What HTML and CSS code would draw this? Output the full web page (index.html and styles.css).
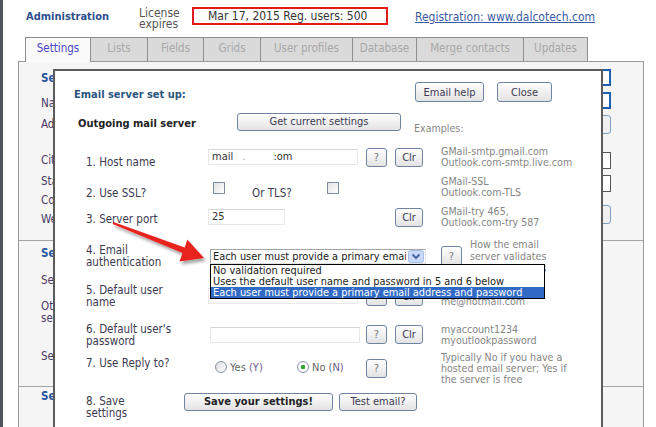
FILE: index.html
```html
<!DOCTYPE html>
<html lang="en">
<head>
  <meta charset="UTF-8">
  <meta name="viewport" content="width=device-width, initial-scale=1">
  <title>Administration - Email server set up</title>
  <link rel="stylesheet" href="styles.css">
</head>
<body>
<div class="page">

  <div class="top">
    <div class="brand">Administration</div>
    <div class="lic">License<br>expires</div>
    <div class="licbox">Mar 17, 2015 Reg. users: 500</div>
    <a class="reg" href="#">Registration: www.dalcotech.com</a>
  </div>

  <div class="tabs">
    <div class="tab on">Settings</div>
    <div class="tab">Lists</div>
    <div class="tab">Fields</div>
    <div class="tab">Grids</div>
    <div class="tab">User profiles</div>
    <div class="tab">Database</div>
    <div class="tab">Merge contacts</div>
    <div class="tab">Updates</div>
  </div>

  <div class="panel">
    <div class="sec sec1">
      <div class="bgl">
        <div class="bh">Settings</div>
        <div class="bt m11">Name</div>
        <div class="bt m7">Address</div>
        <div class="bt m22">City</div>
        <div class="bt m7">State</div>
        <div class="bt m5">Country</div>
        <div class="bt m5">Web site</div>
      </div>
      <div class="bgr">
        <div class="bx blue first"></div>
        <div class="bx blue"></div>
        <div class="bx btnish"></div>
        <div class="bx gray gap18"></div>
        <div class="bx gray"></div>
        <div class="bx btnish gap13"></div>
      </div>
    </div>
    <div class="sec sec2">
      <div class="bgl">
        <div class="bh">Security</div>
        <div class="bt m13">Session timeout</div>
        <div class="bt m13 two">Other<br>settings</div>
        <div class="bt m25">Send limit</div>
      </div>
    </div>
    <div class="sec sec3">
      <div class="bgl">
        <div class="bh">Search</div>
      </div>
    </div>
  </div>

  <div class="modal">
    <div class="mhead">
      <div class="mtitle">Email server set up:</div>
      <div class="mbtns">
        <button class="b help">Email help</button>
        <button class="b close">Close</button>
      </div>
    </div>

    <div class="row0">
      <div class="ttl">Outgoing mail server</div>
      <button class="b getcur">Get current settings</button>
      <div class="exh">Examples:</div>
    </div>

    <div class="frow host">
      <div class="lbl">1. Host name</div>
      <div class="ctl"><div class="inp">mail<span class="dot">.</span><span class="om">:om</span></div></div>
      <div class="hb"><button class="b q">?</button><button class="b clr">Clr</button></div>
      <div class="ex">GMail-smtp.gmail.com<br>Outlook.com-smtp.live.com</div>
    </div>

    <div class="frow ssl">
      <div class="lbl">2. Use SSL?</div>
      <div class="ctl">
        <span class="cb"></span>
        <span class="or">Or TLS?</span>
        <span class="cb two"></span>
      </div>
      <div class="hb"></div>
      <div class="ex">GMail-SSL<br>Outlook.com-TLS</div>
    </div>

    <div class="frow port">
      <div class="lbl">3. Server port</div>
      <div class="ctl"><div class="inp short">25</div></div>
      <div class="hb"><button class="b clr solo">Clr</button></div>
      <div class="ex">GMail-try 465,<br>Outlook.com-try 587</div>
    </div>

    <div class="frow auth">
      <div class="lbl">4. Email<br>authentication</div>
      <div class="sel">
        <span class="seltxt">Each user must provide a primary email address and password</span>
        <span class="arr"><svg width="16" height="13" viewBox="0 0 16 13"><rect x="0.5" y="0.5" width="15" height="12" rx="2" fill="#c9d8f8" stroke="#a9bfe9"/><path d="M4.5 4.5 L8 8 L11.5 4.5" fill="none" stroke="#4d6aa0" stroke-width="2"/></svg></span>
        <div class="dd">
          <div class="opt">No validation required</div>
          <div class="opt">Uses the default user name and password in 5 and 6 below</div>
          <div class="opt cur">Each user must provide a primary email address and password</div>
        </div>
      </div>
      <button class="b q qa">?</button>
      <div class="ex exa">How the email<br>server validates<br>user credentials</div>
    </div>

    <div class="frow user">
      <div class="lbl">5. Default user<br>name</div>
      <div class="ctl"><div class="inp"></div></div>
      <div class="hb"><button class="b q">?</button><button class="b clr">Clr</button></div>
      <div class="ex">myname@gmail.com<br>me@hotmail.com</div>
    </div>

    <div class="frow pass">
      <div class="lbl">6. Default user's<br>password</div>
      <div class="ctl"><div class="inp nudge"></div></div>
      <div class="hb"><button class="b q">?</button><button class="b clr">Clr</button></div>
      <div class="ex">myaccount1234<br>myoutlookpassword</div>
    </div>

    <div class="frow reply">
      <div class="lbl">7. Use Reply to?</div>
      <div class="ctl">
        <span class="ropt yes"><span class="rd"></span><span class="rt">Yes <em>(Y)</em></span></span>
        <span class="ropt"><span class="rd on"></span><span class="rt">No <em>(N)</em></span></span>
      </div>
      <div class="hb"><button class="b q">?</button></div>
      <div class="ex">Typically No if you have a<br>hosted email server; Yes if<br>the server is free</div>
    </div>

    <div class="frow save">
      <div class="lbl">8. Save<br>settings</div>
      <button class="b savebtn">Save your settings!</button>
      <button class="b test">Test email?</button>
    </div>
  </div>

  <svg class="arrow" width="656" height="427" viewBox="0 0 656 427">
    <defs>
      <filter id="sh" x="-20%" y="-20%" width="140%" height="160%">
        <feDropShadow dx="2" dy="3" stdDeviation="1.5" flood-color="#000" flood-opacity="0.35"/>
      </filter>
    </defs>
    <polygon filter="url(#sh)" fill="#e8231f"
      points="113.4,222.1 184.8,247.6 187.2,239.6 204,258 179.4,261.4 182.6,253 112.6,223.9"/>
  </svg>

</div>
</body>
</html>
```

FILE: styles.css
```css
html, body {
  margin: 0;
}
body {
  font-family: "DejaVu Sans Condensed", "DejaVu Sans", sans-serif;
  font-stretch: condensed;
  color: #3d3a52;
  background: #fff;
}
.page {
  position: relative;
  width: 653px;
  height: 427px;
  overflow: hidden;
  border-left: 3px solid #50555f;
}

/* header */
.top {
  display: flex;
  align-items: flex-start;
  height: 37px;
}
.brand {
  margin: 10px 0 0 23px;
  width: 113px;
  font-size: 11px;
  font-weight: bold;
  line-height: 14px;
  color: #2c4f8f;
}
.lic {
  margin-top: 8px;
  width: 53px;
  font-size: 12px;
  line-height: 11px;
  color: #555;
}
.licbox {
  margin-top: 7px;
  width: 196px;
  height: 18px;
  box-sizing: border-box;
  border: 2px solid #e31b1b;
  padding-left: 14px;
  font-size: 12px;
  line-height: 14px;
  color: #333;
}
.reg {
  margin: 10px 0 0 27px;
  font-size: 12px;
  line-height: 14px;
  color: #3b5ba5;
}

/* tabs */
.tabs {
  display: flex;
  margin-left: 22px;
  height: 24px;
}
.tab {
  box-sizing: border-box;
  height: 24px;
  border: 1px solid #8e8e8e;
  border-right: 0;
  border-bottom: 0;
  background: #dadada;
  color: #a8a8a8;
  font-size: 11.5px;
  line-height: 20px;
  text-align: center;
}
.tab:nth-child(1) { width: 65px; }
.tab:nth-child(2) { width: 57px; }
.tab:nth-child(3) { width: 56px; }
.tab:nth-child(4) { width: 57px; }
.tab:nth-child(5) { width: 92px; }
.tab:nth-child(6) { width: 64px; }
.tab:nth-child(7) { width: 107px; }
.tab:nth-child(8) { width: 65px; border-right: 1px solid #8e8e8e; }
.tab.on {
  position: relative;
  z-index: 1;
  height: 25px;
  margin-bottom: -1px;
  background: #fafafa;
  color: #4b45c8;
}

/* settings panel behind the dialog */
.panel {
  margin-left: 15px;
  width: 626px;
  height: 380px;
  box-sizing: border-box;
  border: 1px solid #9a9a9a;
  background: #f5f5f5;
}
.sec {
  display: flex;
  justify-content: space-between;
  box-sizing: border-box;
  border-bottom: 1px solid #a3a3a3;
}
.sec1 { height: 179px; }
.sec2 { height: 146px; }
.sec3 { border-bottom: 0; }
.bgl {
  padding-left: 22px;
  font-size: 11.5px;
  line-height: 14px;
  white-space: nowrap;
}
.bh {
  font-weight: bold;
  color: #2a55a0;
}
.sec1 .bh { margin-top: 9px; }
.sec2 .bh { margin-top: 5px; }
.sec3 .bh { margin-top: 2px; }
.bt { color: #4a3a66; }
.bt.two { line-height: 12px; }
.m5 { margin-top: 5px; }
.m7 { margin-top: 7px; }
.m11 { margin-top: 11px; }
.m13 { margin-top: 13px; }
.m22 { margin-top: 22px; }
.m25 { margin-top: 25px; }
.bgr {
  display: flex;
  flex-direction: column;
  align-items: flex-end;
  margin-right: 32px;
}
.bx {
  width: 150px;
  height: 17px;
  margin-top: 6px;
  box-sizing: border-box;
  background: #fff;
}
.bx.first { margin-top: 7px; }
.bx.blue { border: 2px solid #1f5fb0; }
.bx.btnish {
  height: 19px;
  border: 1px solid #7f9fc4;
  border-radius: 3px;
  background: #f0f0f0;
}
.bx.gray { border: 1px solid #555; height: 17px; }
.gap18 { margin-top: 18px !important; }
.gap13 { margin-top: 13px !important; }

/* dialog */
.modal {
  position: absolute;
  left: 50px;
  top: 69px;
  width: 550px;
  height: 380px;
  box-sizing: border-box;
  border: 2px solid #5c5c5c;
  background: #fff;
}
.b {
  box-sizing: border-box;
  height: 19px;
  padding: 0;
  border: 1px solid #6f84a3;
  border-radius: 3px;
  background: linear-gradient(#fefefe, #e3e3e3);
  font-family: inherit;
  font-stretch: condensed;
  font-size: 11px;
  line-height: 17px;
  color: #3d3a52;
  text-align: center;
}
.mhead {
  display: flex;
  align-items: center;
  height: 20px;
  margin-top: 11px;
  padding: 0 49px 0 19px;
}
.mtitle {
  margin-top: 4px;
  font-size: 11px;
  font-weight: bold;
  color: #2b5580;
}
.mbtns {
  display: flex;
  gap: 13px;
  margin-left: auto;
}
.help { width: 69px; height: 20px; }
.close { width: 55px; height: 20px; }

.row0 {
  display: flex;
  align-items: flex-start;
  height: 28px;
  margin-top: 11px;
  padding-left: 23px;
}
.ttl {
  width: 159px;
  margin-top: 4px;
  font-size: 11px;
  font-weight: bold;
  line-height: 14px;
  color: #222;
}
.getcur { width: 164px; height: 18px; line-height: 16px; }
.exh {
  margin: 9px 0 0 13px;
  font-size: 10.6px;
  line-height: 12px;
  color: #888;
}

.frow {
  display: flex;
  align-items: center;
  padding-left: 31px;
}
.lbl {
  width: 122px;
  flex: none;
  font-size: 11.5px;
  line-height: 12px;
}
.ctl {
  width: 158px;
  flex: none;
  display: flex;
  align-items: center;
}
.hb {
  width: 75px;
  flex: none;
  display: flex;
  gap: 8px;
}
.ex {
  font-size: 10.6px;
  line-height: 11px;
  color: #858585;
  white-space: nowrap;
}
.q { width: 21px; color: #7a7a7a; }
.clr { width: 28px; }
.solo { margin-left: 29px; }

.inp {
  width: 150px;
  height: 16px;
  box-sizing: border-box;
  border: 1px solid #e8e8e8;
  border-top-color: #d6d6d6;
  background: #fff;
  padding-left: 3px;
  font-size: 11px;
  line-height: 14px;
  color: #333;
  white-space: nowrap;
}
.inp.short { width: 77px; }
.inp.nudge { margin-left: 2px; }
.dot { margin-left: 9px; color: #aaa; }
.om { margin-left: 28px; }

.host { height: 32px; }
.host .lbl { margin-top: 10px; }
.ssl { height: 28px; }
.ssl .lbl { margin-top: 12px; }
.port { height: 32px; }
.port .lbl { margin-top: 4px; }
.auth { height: 46px; }
.user { height: 34px; }
.pass { height: 43px; }
.reply { height: 24px; }
.reply .lbl { margin-bottom: 10px; }
.save { height: 44px; }
.save .lbl { width: 98px; margin-top: 10px; }

.cb {
  width: 12px;
  height: 12px;
  margin: 2px 0 0 5px;
  box-sizing: border-box;
  border: 1px solid #7d8da0;
  background: linear-gradient(135deg, #e2e2e2, #fff);
}
.cb.two { margin-left: 0; }
.or {
  width: 75px;
  margin: 12px 0 0 27px;
  font-size: 11.5px;
  line-height: 12px;
}

.sel {
  position: relative;
  width: 216px;
  height: 15px;
  margin-left: 2px;
  box-sizing: border-box;
  border: 1px solid #a5a5a5;
  border-right-color: #e2e2e2;
  border-bottom-color: #e2e2e2;
  background: #fff;
  font-size: 10.9px;
  line-height: 13px;
}
.seltxt {
  display: block;
  width: 193px;
  padding-left: 2px;
  overflow: hidden;
  white-space: nowrap;
  color: #222;
}
.arr {
  position: absolute;
  right: 1px;
  top: 0;
  line-height: 0;
}
.dd {
  position: absolute;
  z-index: 5;
  left: -1px;
  top: 14px;
  width: 333px;
  border: 1px solid #000;
  background: #fff;
  font-size: 10.9px;
  line-height: 11px;
  color: #222;
}
.opt {
  padding-left: 2px;
  white-space: nowrap;
}
.opt.cur {
  background: #316ac5;
  color: #fff;
}
.qa { height: 20px; margin-left: 15px; }
.exa { margin-left: 8px; line-height: 12px; }

.ropt {
  display: flex;
  align-items: center;
}
.ropt.yes {
  width: 82px;
  margin-left: 7px;
}
.rd {
  width: 12px;
  height: 12px;
  box-sizing: border-box;
  border: 1px solid #8494a8;
  border-radius: 50%;
  background: linear-gradient(135deg, #dcdcdc, #fff);
  margin-top: -2px;
}
.rd.on {
  background: radial-gradient(circle, #2fa52f 0 2px, #fff 2.5px);
}
.rt {
  margin-left: 3px;
  font-size: 11px;
  line-height: 12px;
  color: #666;
}
.rt em {
  font-style: normal;
  color: #6a5a86;
}

.savebtn {
  width: 149px;
  height: 18px;
  line-height: 16px;
  font-weight: bold;
  color: #222;
}
.test {
  width: 78px;
  height: 18px;
  line-height: 16px;
  margin-left: 6px;
}

.arrow {
  position: absolute;
  left: -3px;
  top: 0;
  pointer-events: none;
}
```
